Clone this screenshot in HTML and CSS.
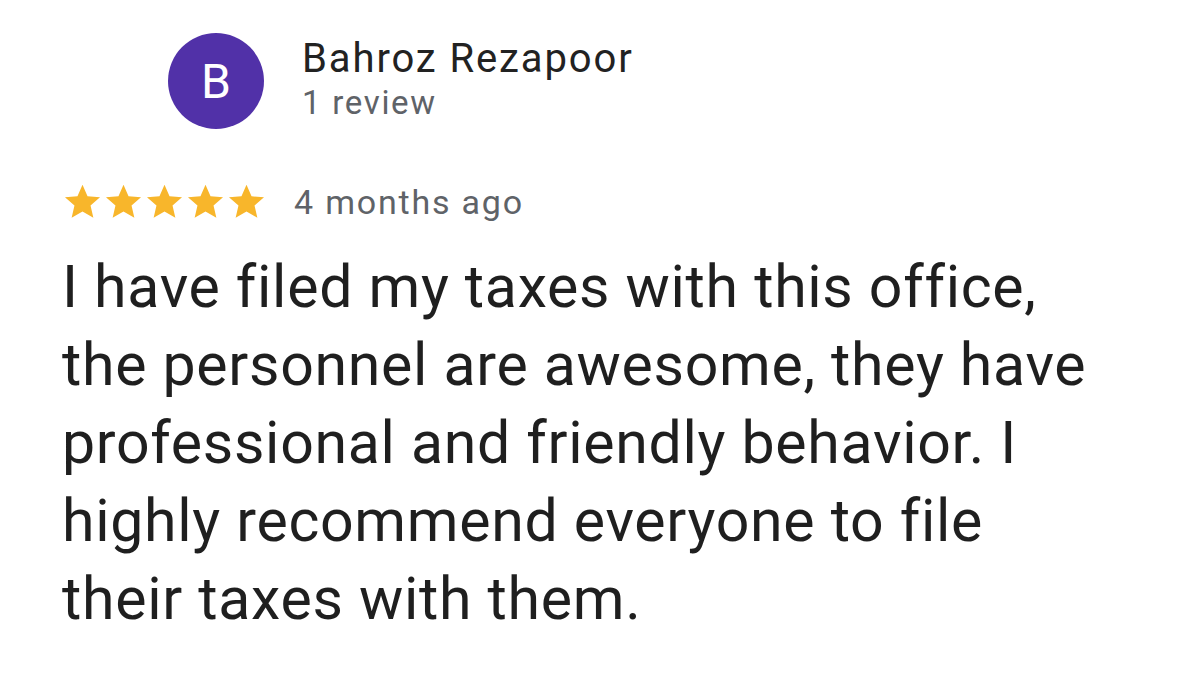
FILE: index.html
```html
<!DOCTYPE html>
<html lang="en">
<head>
<meta charset="utf-8">
<link rel="stylesheet" href="styles.css">
</head>
<body>
<div class="card">
  <div class="author">
    <div class="avatar">B</div>
    <div class="author-info">
      <div class="name">Bahroz Rezapoor</div>
      <div class="count">1 review</div>
    </div>
  </div>
  <div class="meta">
    <div class="stars">
      <svg viewBox="0 0 24 24"><path d="M12 2.2l2.95 6.75 7.3.62-5.55 4.8 1.66 7.2L12 17.8l-6.36 3.77 1.66-7.2-5.55-4.8 7.3-.62z"/></svg>
      <svg viewBox="0 0 24 24"><path d="M12 2.2l2.95 6.75 7.3.62-5.55 4.8 1.66 7.2L12 17.8l-6.36 3.77 1.66-7.2-5.55-4.8 7.3-.62z"/></svg>
      <svg viewBox="0 0 24 24"><path d="M12 2.2l2.95 6.75 7.3.62-5.55 4.8 1.66 7.2L12 17.8l-6.36 3.77 1.66-7.2-5.55-4.8 7.3-.62z"/></svg>
      <svg viewBox="0 0 24 24"><path d="M12 2.2l2.95 6.75 7.3.62-5.55 4.8 1.66 7.2L12 17.8l-6.36 3.77 1.66-7.2-5.55-4.8 7.3-.62z"/></svg>
      <svg viewBox="0 0 24 24"><path d="M12 2.2l2.95 6.75 7.3.62-5.55 4.8 1.66 7.2L12 17.8l-6.36 3.77 1.66-7.2-5.55-4.8 7.3-.62z"/></svg>
    </div>
    <span class="date">4 months ago</span>
  </div>
  <p class="text">I have filed my taxes with this office,<br>the personnel are awesome, they have<br>professional and friendly behavior. I<br>highly recommend everyone to file<br>their taxes with them.</p>
</div>
</body>
</html>
```
FILE: styles.css
```css
html, body {
  margin: 0;
  padding: 0;
  background: #ffffff;
}
body {
  width: 1179px;
  height: 676px;
  overflow: hidden;
  font-family: "Roboto", "Noto Sans", sans-serif;
  color: #1f1f1f;
}
.card {
  padding: 33px 0 0 62px;
}
.author {
  display: flex;
  align-items: center;
  gap: 38px;
  margin-left: 106px;
}
.avatar {
  width: 96px;
  height: 96px;
  border-radius: 50%;
  background: #5131a8;
  color: #fff;
  font-family: "Roboto", sans-serif;
  font-size: 48px;
  display: flex;
  align-items: center;
  justify-content: center;
}
.author-info {
  display: flex;
  flex-direction: column;
  margin-top: -2px;
}
.name {
  font-size: 40px;
  line-height: 46px;
  letter-spacing: 1.9px;
  color: #222;
}
.count {
  font-size: 33px;
  line-height: 42px;
  letter-spacing: 1.7px;
  color: #5f6368;
}
.meta {
  display: flex;
  align-items: center;
  gap: 27px;
  margin-top: 52px;
}
.stars {
  display: flex;
  gap: 0;
}
.stars svg {
  width: 41px;
  height: 41px;
  fill: #f8b62b;
}
.date {
  font-size: 34px;
  letter-spacing: 1.8px;
  color: #5f6368;
}
.text {
  margin: 26px 0 0 0;
  font-size: 59px;
  line-height: 78px;
  letter-spacing: 0.7px;
  color: #1f1f1f;
}
```
